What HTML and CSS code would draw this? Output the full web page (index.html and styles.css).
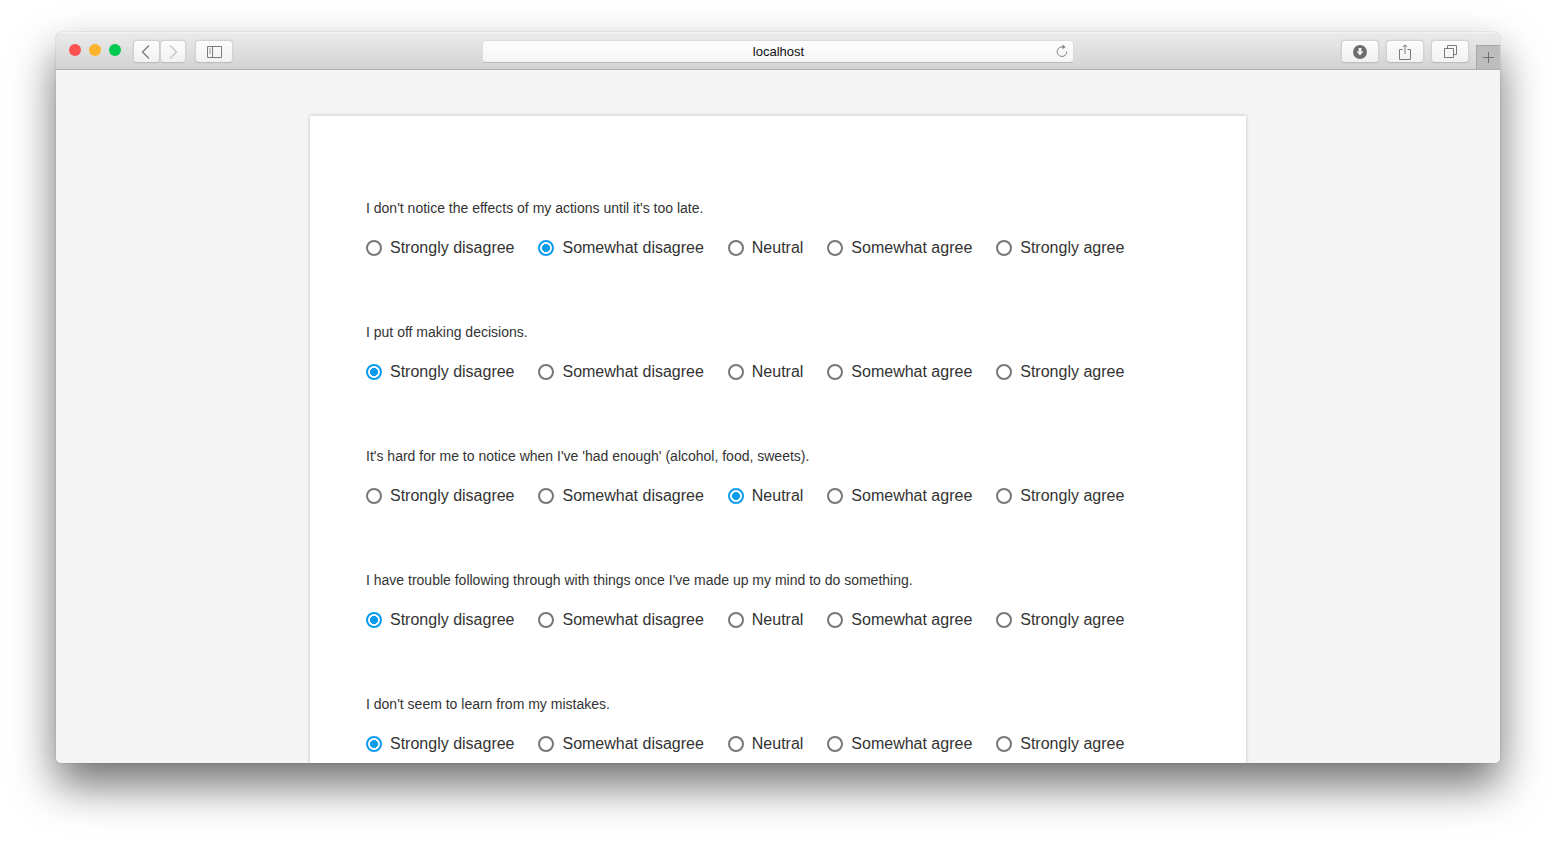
FILE: index.html
```html
<!DOCTYPE html>
<html lang="en">
<head>
<meta charset="utf-8">
<title>localhost</title>
<link rel="stylesheet" href="styles.css">
</head>
<body>
<div class="window">
  <header class="toolbar">
    <div class="lights">
      <span class="light red"></span><span class="light yellow"></span><span class="light green"></span>
    </div>
    <div class="nav">
      <button class="btn nav-btn"><svg width="10" height="16" viewBox="0 0 10 16"><path d="M8 1.500 1.500 8 8 14.500" fill="none" stroke="#7b7b7b" stroke-width="1.300"/></svg></button>
      <button class="btn nav-btn"><svg width="10" height="16" viewBox="0 0 10 16"><path d="M2 1.500 8.500 8 2 14.500" fill="none" stroke="#c6c6c6" stroke-width="1.300"/></svg></button>
    </div>
    <button class="btn side-btn"><svg width="15" height="12" viewBox="0 0 15 12"><path d="M.5.5h14v11H.5zM5.500.5v11" fill="none" stroke="#7b7b7b"/><path d="M2 3h2M2 5h2M2 7h2" stroke="#9a9a9a"/></svg></button>
    <div class="address">
      <span class="host">localhost</span>
      <svg class="reload" width="12" height="14" viewBox="0 0 12 14"><path d="M7.500 3.100A4.800 4.800 0 1 0 10.800 7.600" fill="none" stroke="#7f7f7f"/><path d="M6.500.5 9.500 3 6.500 5.200z" fill="#7f7f7f"/></svg>
    </div>
    <div class="actions">
      <button class="btn act-btn"><svg width="14" height="14" viewBox="0 0 14 14"><circle cx="7" cy="7" r="7" fill="#6e6e6e"/><path d="M5.600 3h2.800v3.600h2L7 10.600 3.600 6.600h2z" fill="#f4f4f4"/></svg></button>
      <button class="btn act-btn"><svg width="12" height="16" viewBox="0 0 12 16"><path d="M3.500 5.500H.5v10h11v-10h-3" fill="none" stroke="#7b7b7b"/><path d="M6 1v9M3.800 3 6 .8 8.200 3" fill="none" stroke="#7b7b7b"/></svg></button>
      <button class="btn act-btn"><svg width="13" height="13" viewBox="0 0 13 13"><path d="M.5 3.500h9v9h-9z" fill="none" stroke="#7b7b7b"/><path d="M3.500 3.500v-3h9v9h-3" fill="none" stroke="#7b7b7b"/></svg></button>
    </div>
    <button class="new-tab"><svg width="11" height="11" viewBox="0 0 11 11"><path d="M5.500 0v11M0 5.500h11" stroke="#6f6f6f"/></svg></button>
  </header>
  <main class="content">
    <form class="card">
      <fieldset class="question">
        <p class="prompt">I don't notice the effects of my actions until it's too late.</p>
        <div class="options">
          <label class="option"><span class="radio"></span>Strongly disagree</label>
          <label class="option"><span class="radio on"></span>Somewhat disagree</label>
          <label class="option"><span class="radio"></span>Neutral</label>
          <label class="option"><span class="radio"></span>Somewhat agree</label>
          <label class="option"><span class="radio"></span>Strongly agree</label>
        </div>
      </fieldset>
      <fieldset class="question">
        <p class="prompt">I put off making decisions.</p>
        <div class="options">
          <label class="option"><span class="radio on"></span>Strongly disagree</label>
          <label class="option"><span class="radio"></span>Somewhat disagree</label>
          <label class="option"><span class="radio"></span>Neutral</label>
          <label class="option"><span class="radio"></span>Somewhat agree</label>
          <label class="option"><span class="radio"></span>Strongly agree</label>
        </div>
      </fieldset>
      <fieldset class="question">
        <p class="prompt">It's hard for me to notice when I've 'had enough' (alcohol, food, sweets).</p>
        <div class="options">
          <label class="option"><span class="radio"></span>Strongly disagree</label>
          <label class="option"><span class="radio"></span>Somewhat disagree</label>
          <label class="option"><span class="radio on"></span>Neutral</label>
          <label class="option"><span class="radio"></span>Somewhat agree</label>
          <label class="option"><span class="radio"></span>Strongly agree</label>
        </div>
      </fieldset>
      <fieldset class="question">
        <p class="prompt">I have trouble following through with things once I've made up my mind to do something.</p>
        <div class="options">
          <label class="option"><span class="radio on"></span>Strongly disagree</label>
          <label class="option"><span class="radio"></span>Somewhat disagree</label>
          <label class="option"><span class="radio"></span>Neutral</label>
          <label class="option"><span class="radio"></span>Somewhat agree</label>
          <label class="option"><span class="radio"></span>Strongly agree</label>
        </div>
      </fieldset>
      <fieldset class="question">
        <p class="prompt">I don't seem to learn from my mistakes.</p>
        <div class="options">
          <label class="option"><span class="radio on"></span>Strongly disagree</label>
          <label class="option"><span class="radio"></span>Somewhat disagree</label>
          <label class="option"><span class="radio"></span>Neutral</label>
          <label class="option"><span class="radio"></span>Somewhat agree</label>
          <label class="option"><span class="radio"></span>Strongly agree</label>
        </div>
      </fieldset>
    </form>
  </main>
</div>
</body>
</html>
```
FILE: styles.css
```css
* { box-sizing: border-box; }
html, body { height: 100%; }
body {
  margin: 0;
  padding: 32px 56px 80px;
  background: #fff;
  overflow: hidden;
  font-family: "Liberation Sans", Arial, sans-serif;
}
.window {
  height: 731px;
  display: flex;
  flex-direction: column;
  border-radius: 6px 6px 5px 5px;
  overflow: hidden;
  box-shadow: 0 22px 44px rgba(0, 0, 0, .56), 0 0 1px rgba(0, 0, 0, .5);
}
.toolbar {
  flex: none;
  height: 38px;
  display: flex;
  align-items: flex-start;
  padding: 7px 0 0 13px;
  background: linear-gradient(#ebebeb, #d3d3d3);
  border-top: 1px solid #f3f3f3;
  border-bottom: 1px solid #aeaeae;
  position: relative;
}
.lights { display: flex; gap: 8px; margin-top: 4px; }
.light { width: 12px; height: 12px; border-radius: 50%; }
.red { background: #fc4f50; }
.yellow { background: #fdb32c; }
.green { background: #00c950; }
.btn {
  padding: 0;
  height: 23px;
  display: flex;
  align-items: center;
  justify-content: center;
  background: linear-gradient(#fdfdfd, #f1f1f1);
  border: 1px solid #d2d2d2;
  border-bottom-color: #bcbcbc;
  border-radius: 4px;
  box-shadow: 0 0 1px rgba(0, 0, 0, .22);
}
.nav { display: flex; margin-left: 12px; }
.nav-btn { width: 26.5px; }
.side-btn { width: 38px; margin-left: 9px; }
.address {
  position: absolute;
  left: 426px;
  top: 7px;
  width: 592px;
  height: 23px;
  padding-left: 1px;
  display: flex;
  align-items: center;
  justify-content: center;
  background: linear-gradient(#fefefe, #f5f5f5);
  border: 1px solid #dcdcdc;
  border-bottom-color: #b8b8b8;
  border-radius: 4px;
}
.host { font-size: 13px; color: #111; }
.reload { position: absolute; right: 5px; top: 3px; }
.actions {
  position: absolute;
  left: 1285px;
  top: 7px;
  display: flex;
  gap: 7px;
}
.act-btn { width: 38px; }
.new-tab {
  position: absolute;
  right: 0;
  top: 12px;
  width: 24px;
  height: 24px;
  padding: 0;
  display: flex;
  align-items: center;
  justify-content: center;
  background: #bdbdbd;
  border: 0;
  border-left: 1px solid #a8a8a8;
  border-top: 1px solid #a8a8a8;
}
.content {
  flex: 1;
  min-height: 0;
  overflow: hidden;
  background: #f5f5f5;
  padding-top: 46px;
}
.card {
  width: 936px;
  margin: 0 auto;
  padding: 28px 56px 0;
  background: #fff;
  box-shadow: 0 0 4px rgba(0, 0, 0, .22);
}
.question {
  margin: 0;
  padding: 56px 0 0;
  border: 0;
  height: 124px;
}
.prompt {
  margin: 0 0 23px;
  font-size: 14px;
  line-height: 16px;
  color: #333;
}
.options { display: flex; gap: 23.95px; }
.option {
  display: flex;
  align-items: center;
  gap: 8px;
  font-size: 16px;
  line-height: 18px;
  color: #333;
}
.radio {
  width: 16px;
  height: 16px;
  border: 2px solid #777;
  border-radius: 50%;
  background: #fff;
}
.radio.on {
  border-color: #0a9cf0;
  background: radial-gradient(circle, #0a9cf0 0 3.8px, #fff 4.3px);
}
```
